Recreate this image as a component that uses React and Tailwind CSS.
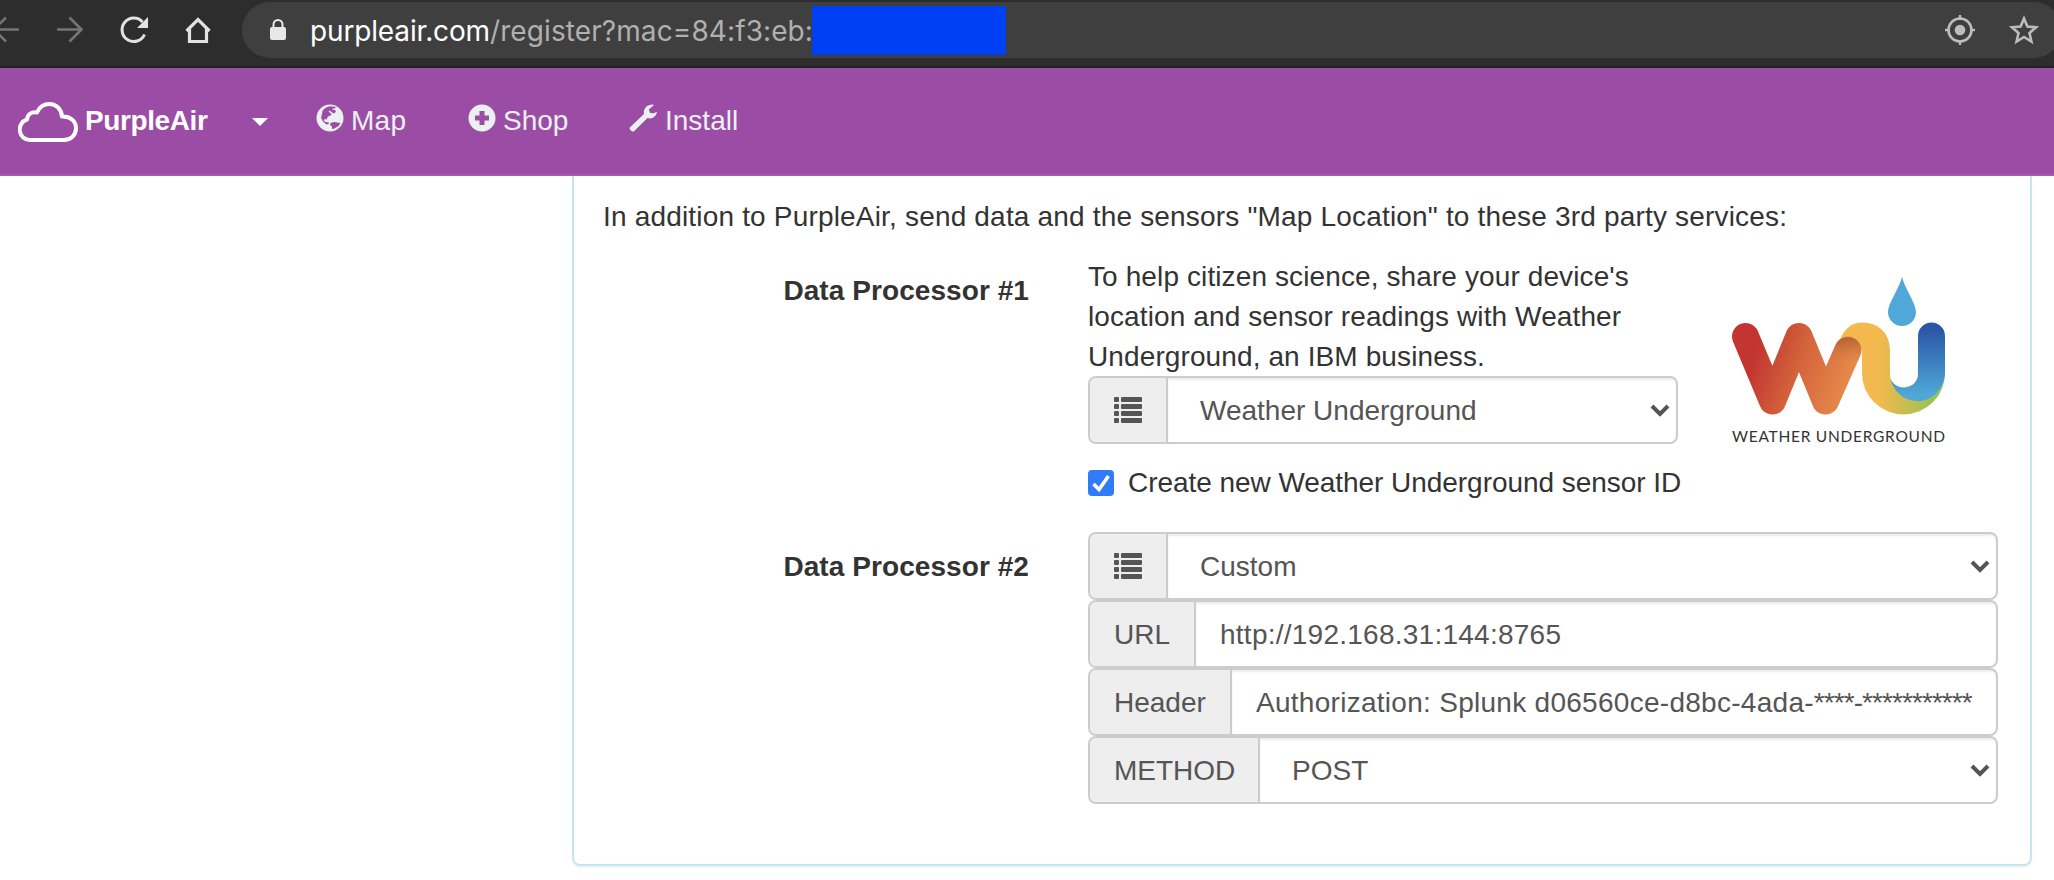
import React from "react";

const FONT = "font-['Liberation_Sans',Arial,sans-serif]";

function Browser() {
  return (
    <header className="flex h-[68px] items-start border-b-2 border-[#222222] bg-[#2d2d2d] pt-0.5">
      <div className="flex h-14 w-[242px] shrink-0 items-center">
        <svg className="h-14 w-[242px]" viewBox="0 2 242 56" fill="none">
          <g stroke="#757575" strokeWidth="2.6">
            <path d="M19 29.5H-5M6 17.500L-6 29.500L6 41.500" />
            <path d="M57 29.500H81M69.500 17.500L81.500 29.500L69.500 41.500" />
          </g>
          <path d="M144.500 34.500A11.700 11.700 0 1 1 142.500 22" stroke="#e2e2e2" strokeWidth="3" />
          <path d="M148 17V28H137Z" fill="#e2e2e2" />
          <path d="M186.500 31L198 19.500L209.500 31M189.500 29V41.500H206.500V29" stroke="#e2e2e2" strokeWidth="3.200" />
        </svg>
      </div>
      <div className="-mr-2 flex h-14 flex-1 items-center rounded-full bg-[#3f3f3f] pl-[27px]">
        <svg className="h-[22px] w-[18px]" viewBox="0 0 18 22">
          <rect x="1" y="8" width="16" height="13" rx="2" fill="#e8e8e8" />
          <path d="M4.500 9V5.500a4.500 4.500 0 0 1 9 0V9" fill="none" stroke="#e8e8e8" strokeWidth="2" />
        </svg>
        <div className="ml-[23px] w-[502px] pt-px whitespace-nowrap font-[Inter,sans-serif] text-[28px] leading-10 tracking-[0.1px] text-[#b0b0b0]">
          <span className="tracking-[-0.15px] text-white">purpleair.com</span>/register?mac=84:f3:eb:
        </div>
        <div className="h-[49px] w-[194px] bg-[#0040f5]" />
        <svg className="mr-[23px] ml-auto h-[34px] w-[96px]" viewBox="0 0 96 34" fill="none" stroke="#bdbdbd">
          <circle cx="17" cy="17" r="11.500" strokeWidth="2.600" />
          <circle cx="17" cy="17" r="5.300" fill="#bdbdbd" stroke="none" />
          <path d="M17 2v5M17 27v5M2 17h5M27 17h5" strokeWidth="2.400" />
          <path d="M81 5.500L84.400 13.500L93 14.300L86.500 20L88.400 28.500L81 24L73.600 28.500L75.500 20L69 14.300L77.600 13.500Z" strokeWidth="2.600" />
        </svg>
      </div>
    </header>
  );
}

function Nav() {
  return (
    <nav className="flex h-[108px] items-start border-b-2 border-[#a957b3] bg-[#9b4da6] pt-[33px] pl-[18px] text-[28px] leading-10 whitespace-nowrap text-[#ecf0f1]">
      <svg className="mt-px h-10 w-[60px]" viewBox="0 0 60 40" fill="none">
        <path d="M12 38A10.500 10.500 0 0 1 9 17.500C9.500 12.500 13 9.500 19 10.500C21.500 4.500 26 2 31.500 2C38 2 43.500 7 44 14.500C52 14 58 19 58 26C58 33 53 38 46 38Z" stroke="#fff" strokeWidth="4" strokeLinejoin="round" />
      </svg>
      <span className="ml-[7px] w-[167px] font-bold tracking-[-0.4px] text-white">PurpleAir</span>
      <svg className="mt-[17px] h-2 w-4" viewBox="0 0 16 8"><path d="M0 0H16L8 8Z" fill="#fff" /></svg>
      <svg className="mt-[3px] ml-[48px] h-7 w-7" viewBox="0 0 28 28">
        <circle cx="14" cy="14" r="13.500" fill="#ecf0f1" />
        <path d="M6.500 6.500L10 3.500L14 2.200L19 2.800L20 4L17 4.500L16 5.500L19 6L20 8L17.500 9.500L13.500 6.500L12.500 7.500L15 9.500L15.500 11L12 12.500L10.500 15.500L8.500 15L7.800 17L10 18L13 18.500L12.500 20L10.500 20.500L7 17.500L5 13.500L6 10Z" fill="#9b4da6" />
        <path d="M14.500 19L18 18L24.500 19L22.500 22L18.500 24.500L16 25L16 22.500L14 21Z" fill="#9b4da6" />
      </svg>
      <span className="ml-[7px] w-[117px] tracking-[0.3px]">Map</span>
      <svg className="mt-[3px] h-7 w-7" viewBox="0 0 28 28">
        <circle cx="14" cy="14" r="13.500" fill="#ecf0f1" />
        <path d="M14 7V21M7 14H21" stroke="#9b4da6" strokeWidth="5" />
      </svg>
      <span className="ml-[7px] w-[126px]">Shop</span>
      <svg className="mt-[3px] h-7 w-7" viewBox="0 0 28 28">
        <path d="M.8 23.500L15 10C14 5 18 .5 23.500 .5L25 1L19.800 5.500L21 9L25 9.200L28 7.500C27.500 12.500 23 15.500 18.500 14L5 27.200C3.500 28.500 -.5 25 .8 23.500Z" fill="#ecf0f1" />
      </svg>
      <span className="ml-2">Install</span>
    </nav>
  );
}

function ListIcon() {
  return (
    <svg className="h-[27px] w-7" viewBox="0 0 28 27" fill="#555">
      {[0, 7, 14, 21].map((y) => (
        <g key={y}>
          <rect x="0" y={y} width="5" height="5" rx="1" />
          <rect x="7" y={y} width="21" height="5" rx="1" />
        </g>
      ))}
    </svg>
  );
}

function Field({ addon, addonClass, children, select }) {
  return (
    <div className="flex h-[68px] overflow-hidden rounded-lg border-2 border-[#ccc] bg-white text-[28px] leading-10 whitespace-nowrap text-[#555]">
      <div className={`flex shrink-0 items-center border-r-2 border-[#ccc] bg-[#eee] pt-px pl-6 ${addonClass}`}>{addon}</div>
      <div className={`flex flex-1 items-center pt-px shadow-[inset_0_2px_2px_rgba(0,0,0,0.075)] ${select ? "pl-8" : "pl-6"}`}>
        <span>{children}</span>
        {select && (
          <svg className="mr-[6px] ml-auto h-[14px] w-5" viewBox="0 0 20 14">
            <path d="M2 2L10 10L18 2" fill="none" stroke="#555" strokeWidth="4" />
          </svg>
        )}
      </div>
    </div>
  );
}

function Logo() {
  return (
    <svg className="mt-[21px] ml-[42px] h-[180px] w-[240px] shrink-0" viewBox="0 0 240 180" fill="none">
      <defs>
        <linearGradient id="w" gradientUnits="userSpaceOnUse" x1="18" y1="70" x2="135" y2="110">
          <stop offset="0.15" stopColor="#c23531" />
          <stop offset="0.5" stopColor="#d3623b" />
          <stop offset="1" stopColor="#e88f4c" />
        </linearGradient>
        <linearGradient id="shade" gradientUnits="userSpaceOnUse" x1="128" y1="60" x2="128" y2="86">
          <stop offset="0" stopColor="#a85c31" stopOpacity=".85" />
          <stop offset="1" stopColor="#d9783f" stopOpacity="0" />
        </linearGradient>
        <linearGradient id="u" gradientUnits="userSpaceOnUse" x1="160" y1="0" x2="216" y2="0">
          <stop offset="0" stopColor="#f3b94f" />
          <stop offset="0.6" stopColor="#b9bf50" />
          <stop offset="1" stopColor="#8cc656" />
        </linearGradient>
        <linearGradient id="b" gradientUnits="userSpaceOnUse" x1="0" y1="52" x2="0" y2="118">
          <stop offset="0" stopColor="#2a57a5" />
          <stop offset="1" stopColor="#4fa8d8" />
        </linearGradient>
      </defs>
      <path d="M116 76C120 57 128 45.500 142 45.500C160 45.500 170 58 170 73V98C170 106 176 111 184 111L225 96A41.500 41.500 0 0 1 142 96V72Z" fill="url(#u)" />
      <path d="M25.500 59.500L52.500 124L79 59.500L105.500 124L128 73" stroke="url(#w)" strokeWidth="27" strokeLinecap="round" strokeLinejoin="round" />
      <path d="M115.600 67.800A13.500 13.500 0 0 1 140.400 78.400L137 87H107.500Z" fill="url(#shade)" />
      <path d="M170 97C170 105 176 110.500 184 110.500C192 110.500 198 104.500 198 97V59A13.500 13.500 0 0 1 225 59V97C223 114 211 124 198 124C183 124 171 113 170 97Z" fill="url(#b)" />
      <path d="M182 0C185 12 196 26 196 35A14 14 0 0 1 168 35C168 26 179 12 182 0Z" fill="#50a8d8" />
      <text x="12" y="165" textLength="213" fontFamily="Lato, sans-serif" fontSize="15.500" fill="#333">WEATHER UNDERGROUND</text>
    </svg>
  );
}

export default function App() {
  return (
    <div className={`h-[880px] w-[2054px] overflow-hidden bg-white text-[#333] ${FONT}`}>
      <Browser />
      <Nav />
      <main className="ml-[572px] h-[690px] w-[1460px] rounded-b-lg border-x-2 border-b-2 border-[#c4e6ef] pt-[21px] pl-7 text-[28px] leading-10 shadow-[0_2px_2px_rgba(0,0,0,0.05)]">
        <p className="pl-px tracking-[0.18px] whitespace-nowrap">In addition to PurpleAir, send data and the sensors "Map Location" to these 3rd party services:</p>
        <section className="mt-[19px] flex h-[276px]">
          <h2 className="w-[427px] shrink-0 pt-[15px] text-right font-bold tracking-[0.07px]">Data Processor #1</h2>
          <div className="ml-[59px] w-[590px] shrink-0">
            <p className="h-[120px] pt-px tracking-[0.11px] whitespace-nowrap">
              To help citizen science, share your device's<br />location and sensor readings with Weather<br />Underground, an IBM business.
            </p>
            <Field select addon={<ListIcon />} addonClass="w-[78px]">Weather Underground</Field>
            <label className="mt-[18px] flex items-start whitespace-nowrap">
              <svg className="mt-2 mr-[14px] h-[26px] w-[26px] shrink-0" viewBox="0 0 26 26">
                <rect width="26" height="26" rx="4" fill="#2f7cf6" />
                <path d="M5.500 14L11 19.500L20.500 6" fill="none" stroke="#fff" strokeWidth="3.600" />
              </svg>
              <span className="pt-px tracking-[-0.05px]">Create new Weather Underground sensor ID</span>
            </label>
          </div>
          <Logo />
        </section>
        <section className="flex">
          <h2 className="w-[427px] shrink-0 pt-[15px] text-right font-bold tracking-[0.07px]">Data Processor #2</h2>
          <div className="ml-[59px] w-[910px] shrink-0">
            <Field select addon={<ListIcon />} addonClass="w-[78px]">Custom</Field>
            <Field addon="URL" addonClass="w-[106px]"><span className="tracking-[0.25px]">http://192.168.31:144:8765</span></Field>
            <Field addon="Header" addonClass="w-[142px]"><span className="tracking-[0.28px]">Authorization: Splunk d06560ce-d8bc-4ada-</span><span className="tracking-[-0.93px]">****-***********</span></Field>
            <Field select addon="METHOD" addonClass="w-[170px]">POST</Field>
          </div>
        </section>
      </main>
    </div>
  );
}
